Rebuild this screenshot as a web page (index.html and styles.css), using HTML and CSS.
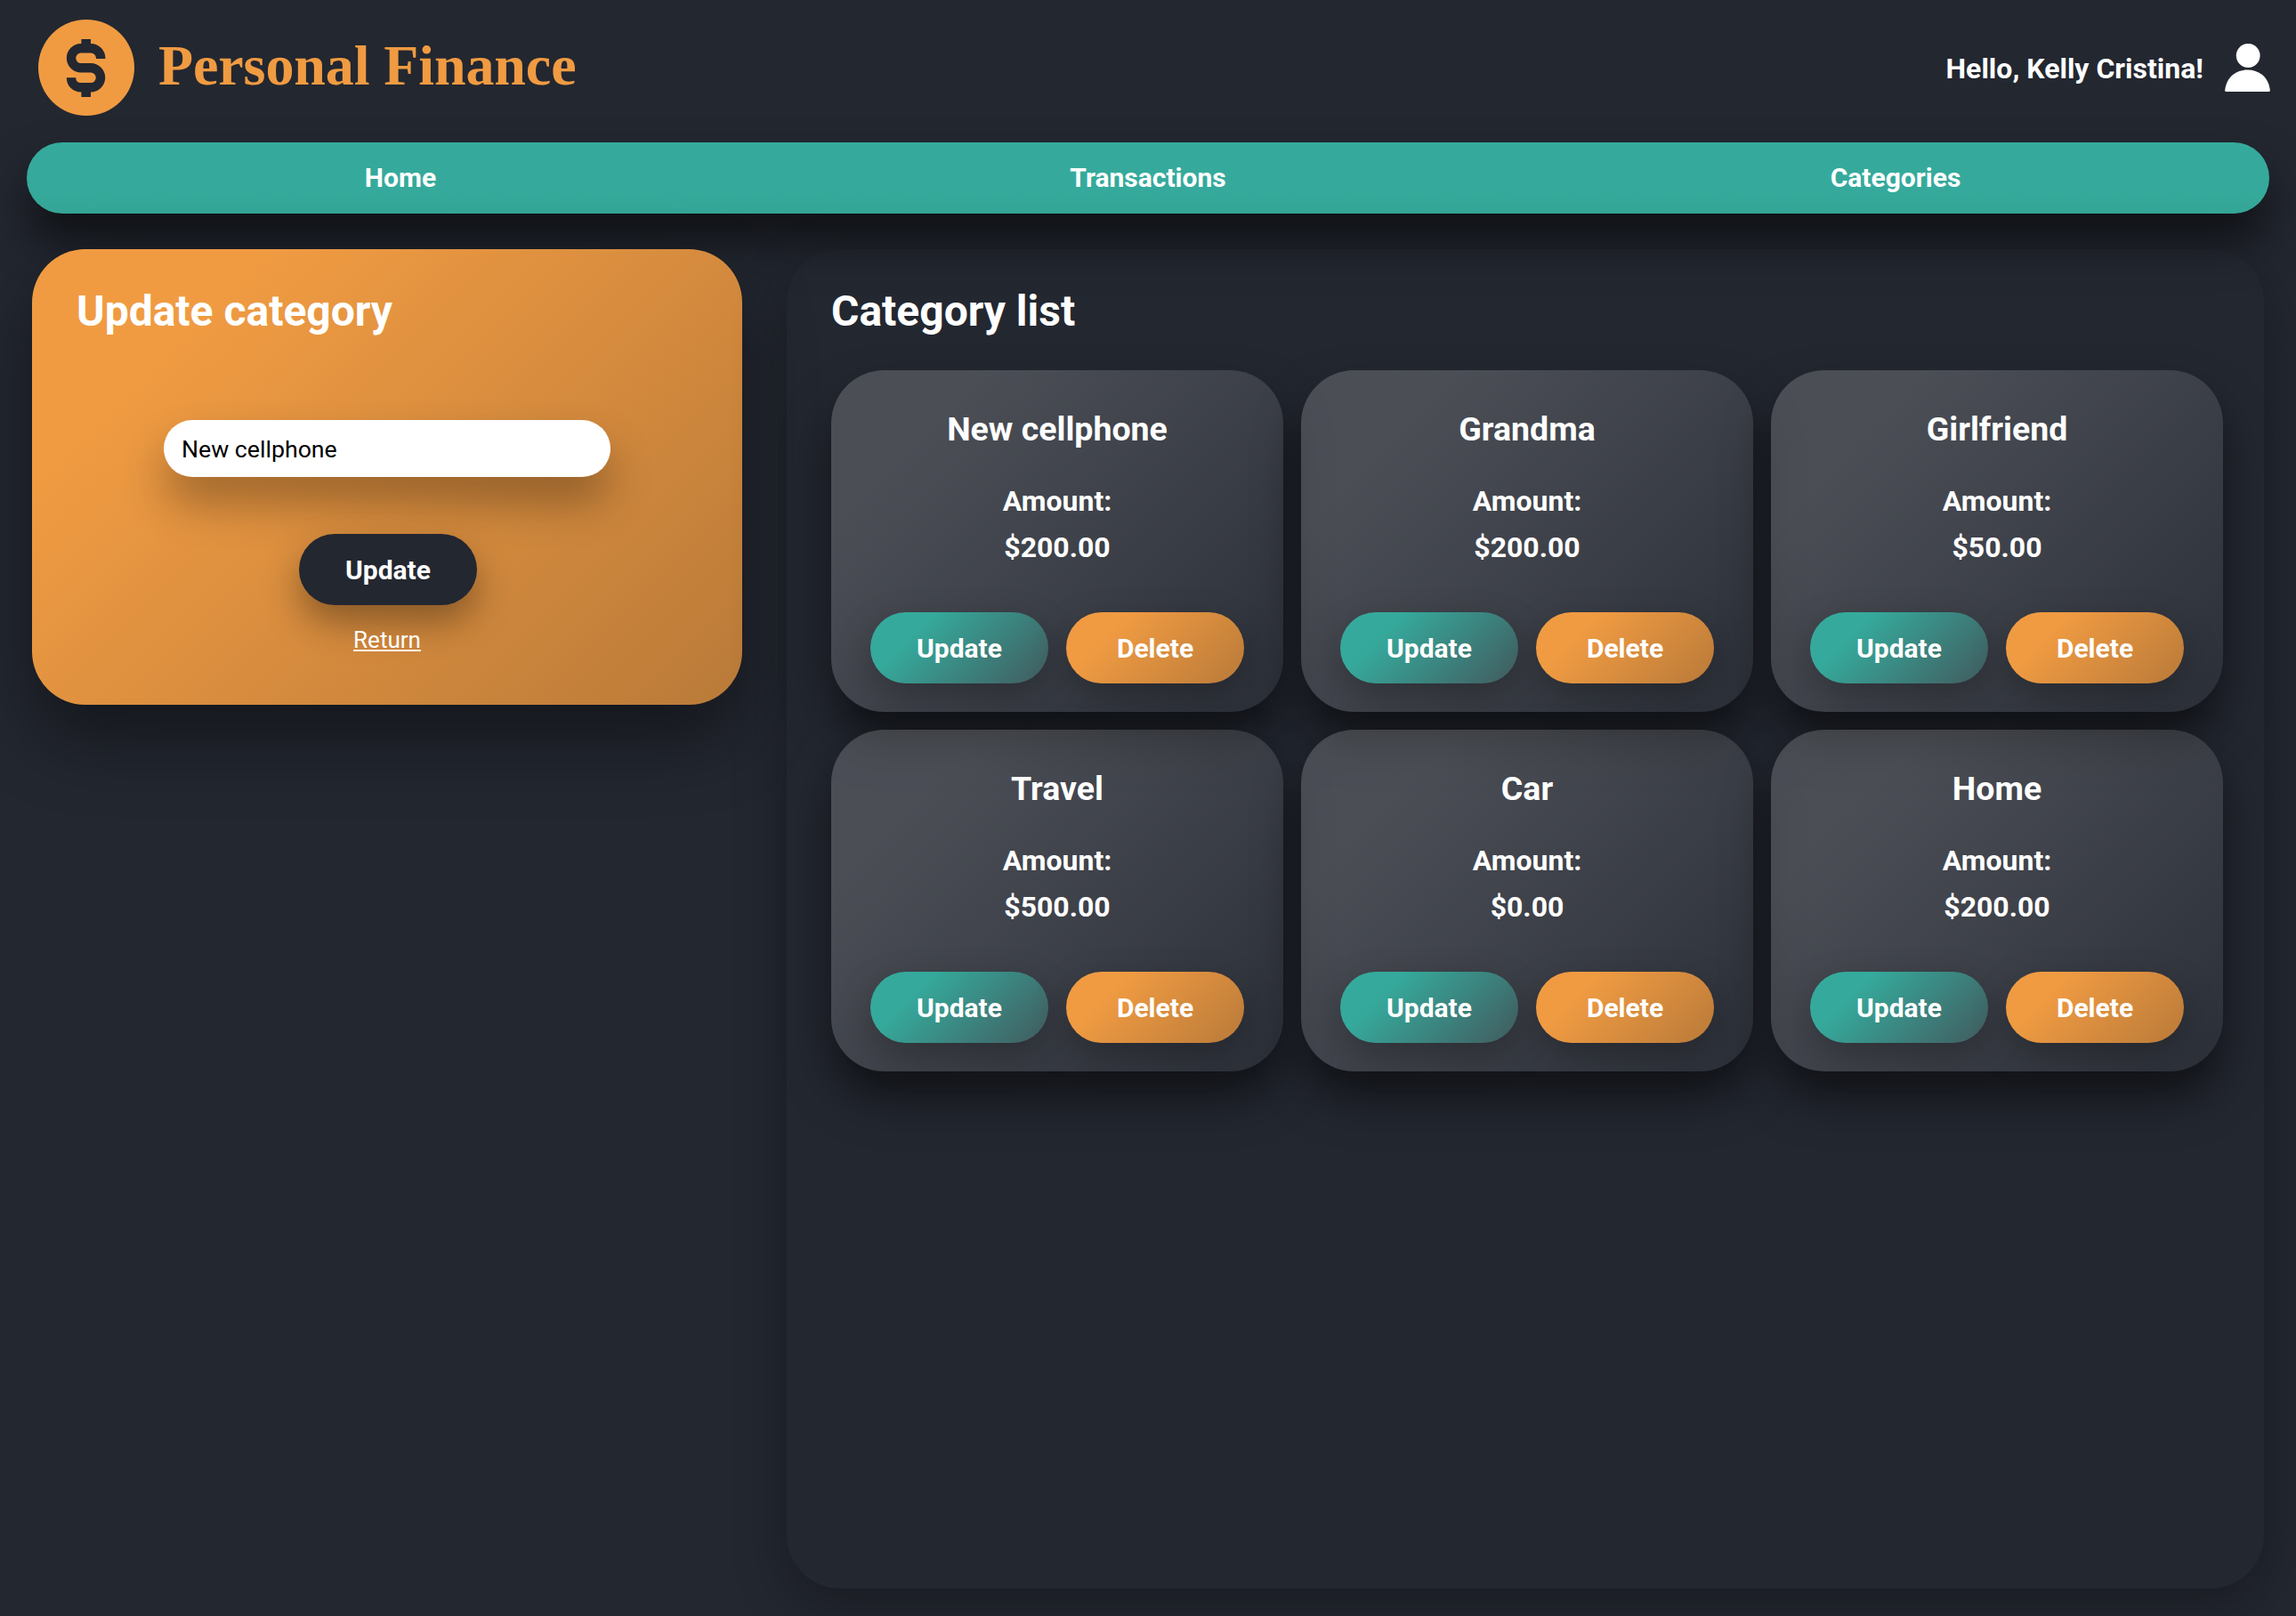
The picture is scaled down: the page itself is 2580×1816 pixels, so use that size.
FILE: index.html
```html
<!DOCTYPE html>
<html lang="en">
<head>
<meta charset="utf-8">
<title>Personal Finance</title>
<link rel="stylesheet" href="styles.css">
</head>
<body>
<header class="top">
  <div class="brand">
    <svg class="logo" viewBox="0 0 108 108" aria-hidden="true">
      <circle cx="54" cy="54" r="54" fill="#f09b42"/>
      <path d="M70.3 44C70.3 37 65 32.3 59 32.3H48A11 11 0 0 0 48 54.3H59A11 11 0 0 1 59 76.3H48C42 76.3 37 72 37 65.3" fill="none" stroke="#232730" stroke-width="10.4"/>
      <path d="M48.4 22H59V30H48.4zM48.4 78H59V87H48.4z" fill="#232730"/>
    </svg>
    <h1 class="brand-name">Personal Finance</h1>
  </div>
  <div class="user">
    <span class="hello">Hello, Kelly Cristina!</span>
    <svg class="avatar" viewBox="0 0 51 54" aria-hidden="true">
      <circle cx="26.2" cy="13.5" r="13.4" fill="#fff"/>
      <path d="M1.5 54Q0 54 .2 52C2 38 12 29.5 25.5 29.5S49 38 50.8 52Q51 54 49.5 54z" fill="#fff"/>
    </svg>
  </div>
</header>
<nav class="nav">
  <a class="nav-link">Home</a>
  <a class="nav-link">Transactions</a>
  <a class="nav-link">Categories</a>
</nav>
<main class="main">
  <section class="form-card">
    <h2 class="heading">Update category</h2>
    <form class="form">
      <input class="field" type="text" value="New cellphone">
      <button class="btn btn-dark" type="button">Update</button>
      <a class="return">Return</a>
    </form>
  </section>
  <section class="panel">
    <h2 class="heading">Category list</h2>
    <div class="grid">
      <article class="card"><h3 class="card-title">New cellphone</h3><p class="amount">Amount:</p><p class="value">$200.00</p><div class="actions"><button class="btn btn-teal" type="button">Update</button><button class="btn btn-orange" type="button">Delete</button></div></article>
      <article class="card"><h3 class="card-title">Grandma</h3><p class="amount">Amount:</p><p class="value">$200.00</p><div class="actions"><button class="btn btn-teal" type="button">Update</button><button class="btn btn-orange" type="button">Delete</button></div></article>
      <article class="card"><h3 class="card-title">Girlfriend</h3><p class="amount">Amount:</p><p class="value">$50.00</p><div class="actions"><button class="btn btn-teal" type="button">Update</button><button class="btn btn-orange" type="button">Delete</button></div></article>
      <article class="card"><h3 class="card-title">Travel</h3><p class="amount">Amount:</p><p class="value">$500.00</p><div class="actions"><button class="btn btn-teal" type="button">Update</button><button class="btn btn-orange" type="button">Delete</button></div></article>
      <article class="card"><h3 class="card-title">Car</h3><p class="amount">Amount:</p><p class="value">$0.00</p><div class="actions"><button class="btn btn-teal" type="button">Update</button><button class="btn btn-orange" type="button">Delete</button></div></article>
      <article class="card"><h3 class="card-title">Home</h3><p class="amount">Amount:</p><p class="value">$200.00</p><div class="actions"><button class="btn btn-teal" type="button">Update</button><button class="btn btn-orange" type="button">Delete</button></div></article>
    </div>
  </section>
</main>
</body>
</html>
```
FILE: styles.css
```css
* { box-sizing: border-box; }
html, body { margin: 0; padding: 0; }
body {
  height: 1816px;
  overflow: hidden;
  background: #232730;
  color: #fff;
  font-family: Roboto, sans-serif;
}
.top {
  height: 160px;
  padding: 22px 29px 0 43px;
  display: flex;
  justify-content: space-between;
  align-items: flex-start;
}
.brand { display: flex; align-items: center; gap: 27px; height: 108px; }
.logo { width: 108px; height: 108px; display: block; }
.brand-name {
  margin: 0 0 4px;
  font: 700 64px "Liberation Serif", serif;
  letter-spacing: -0.1px;
  color: #f09b42;
}
.user { display: flex; align-items: flex-start; gap: 24px; height: 108px; }
.hello { font-weight: 700; font-size: 32px; line-height: 40px; margin-top: 35px; }
.avatar { width: 51px; height: 54px; display: block; margin-top: 27px; }
.nav {
  margin: 0 30px;
  height: 80px;
  padding-bottom: 2px;
  border-radius: 40px;
  background: linear-gradient(180deg, #35aa9c 65%, #34a596 100%);
  box-shadow: 0 30px 50px rgba(0,0,0,.55);
  display: grid;
  grid-template-columns: repeat(3, 1fr);
  align-items: center;
  text-align: center;
}
.nav-link { font-weight: 700; font-size: 30px; color: #fff; }
.main {
  display: flex;
  align-items: flex-start;
  gap: 50px;
  padding: 40px 36px 0 36px;
}
.heading { margin: 0; font-size: 48px; font-weight: 700; line-height: 54px; color: #fff; }
.form-card {
  flex: 0 0 798px;
  height: 512px;
  padding: 43px 50px 0;
  border-radius: 60px;
  background: linear-gradient(135deg, #f09b42 20%, #b97a39 100%);
  box-shadow: 0 40px 80px rgba(0,0,0,.42);
}
.form { display: flex; flex-direction: column; align-items: center; padding-top: 95px; }
.field {
  width: 502px;
  height: 64px;
  border: 0;
  border-radius: 32px;
  background: #fff;
  color: #000;
  padding: 2px 20px 0;
  font: 400 26.7px Roboto, sans-serif;
  box-shadow: 0 30px 50px rgba(0,0,0,.3);
  outline: 0;
}
.btn {
  width: 200px;
  height: 80px;
  border: 0;
  border-radius: 40px;
  color: #fff;
  font: 700 30px Roboto, sans-serif;
  padding: 0;
}
.btn-dark { margin: 64px 0 0 2px; background: #232730; box-shadow: 0 20px 40px rgba(0,0,0,.35); }
.btn-teal { background: linear-gradient(135deg, #35aa9c 25%, #425a5e 100%); box-shadow: 0 15px 40px rgba(0,0,0,.25); }
.btn-orange { background: linear-gradient(135deg, #f09b42 25%, #b97a39 100%); box-shadow: 0 15px 40px rgba(0,0,0,.25); }
.return { margin-top: 22px; font-size: 26px; line-height: 34px; color: #fff; text-decoration: underline; }
.panel {
  flex: 0 0 1660px;
  height: 1505px;
  padding: 43px 46px 0 50px;
  border-radius: 60px;
  background: transparent;
  box-shadow: 0 20px 60px rgba(0,0,0,.3);
}
.grid {
  margin-top: 39px;
  display: grid;
  grid-template-columns: repeat(3, 508px);
  grid-auto-rows: 384px;
  gap: 20px;
}
.card {
  border-radius: 60px;
  padding: 43px 44px 0;
  background: linear-gradient(135deg, rgba(255,255,255,.18) 20%, rgba(255,255,255,.04) 100%);
  box-shadow: 0 30px 50px rgba(0,0,0,.5);
  text-align: center;
}
.card-title { margin: 0; font-size: 37.5px; font-weight: 700; line-height: 46px; }
.amount { margin: 40px 0 0; font-size: 32px; font-weight: 700; line-height: 36px; }
.value { margin: 16px 0 0; font-size: 32px; font-weight: 700; line-height: 36px; }
.actions { margin-top: 55px; display: flex; justify-content: space-between; }
```
